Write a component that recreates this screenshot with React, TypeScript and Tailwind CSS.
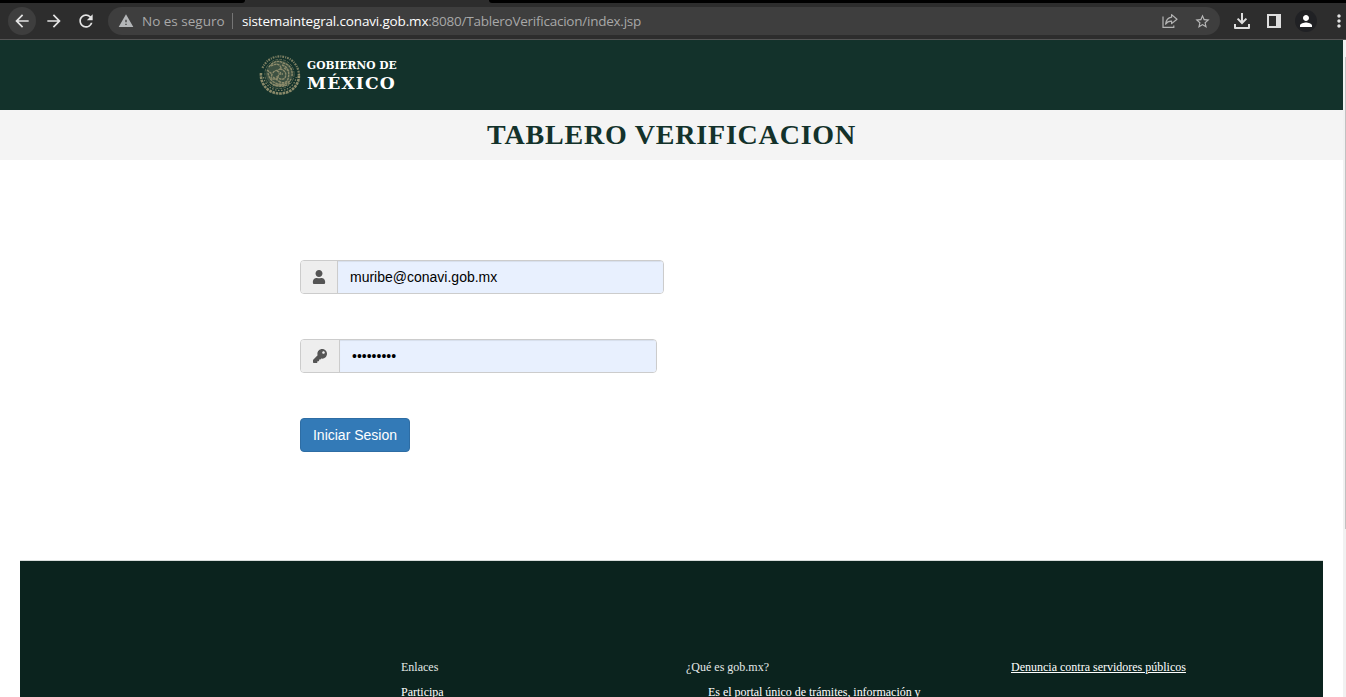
import React from "react";
import { MdArrowBack, MdArrowForward, MdRefresh, MdWarning, MdStarBorder, MdPerson, MdMoreVert } from "react-icons/md";
import { FaUser, FaKey } from "react-icons/fa";

function ShareIcon() {
  return (
    <svg width="16" height="16" viewBox="0 0 16 16" fill="none" stroke="#b4b4b4" strokeWidth="1.2">
      <path d="M1 3.5V14.4H11.8V12.6" />
      <path d="M9.6 1.6L15 6.2L9.6 10.6V8.2C6.8 8.1 5 9 3.6 11.2C4 7.4 6 4.7 9.6 4.2Z" strokeLinejoin="round" />
    </svg>
  );
}

function DownloadIcon() {
  return (
    <svg width="16" height="16" viewBox="0 0 16 16" fill="none" stroke="#dedede" strokeWidth="2">
      <path d="M8 0V10M3.6 5.6L8 10L12.4 5.6" />
      <path d="M1 11V15H15V11" strokeLinejoin="round" />
    </svg>
  );
}

function PanelIcon() {
  return (
    <svg width="14" height="14" viewBox="0 0 14 14">
      <path fill="#dedede" fillRule="evenodd" d="M0 0H14V14H0ZM2 2V12H9V2Z" />
    </svg>
  );
}

function Emblem() {
  return (
    <svg width="42" height="42" viewBox="0 0 42 42" fill="none" stroke="#a09a76">
      <path d="M3.5 14A19 19 0 0 1 38.5 14" strokeWidth="2.2" strokeDasharray="1.8 1.1 1 1" opacity=".75" />
      <path d="M38.5 14A19 19 0 0 1 39.7 24" strokeWidth="2.2" strokeDasharray="1.8 1.1" opacity=".75" />
      <path d="M2 19C1 31 10 39.5 21 39.5S41 31 39.8 20" strokeWidth="2.6" strokeDasharray="2.6 .8" opacity=".85" />
      <path d="M4.5 23C6 31 13 36.5 21 36.5S36 31 37.2 23" strokeWidth="1.2" strokeDasharray="1.5 1.5" opacity=".8" />
      <circle cx="20.5" cy="20" r="13.5" fill="#a09a76" fillOpacity=".3" stroke="none" />
      <circle cx="20.5" cy="20" r="14.6" strokeWidth="1" opacity=".5" strokeDasharray="3 1" />
      <g strokeWidth="1.4" strokeDasharray="2.6 .6" opacity=".8">
        <path d="M10 13C14 7 20 6 24 9C30 10 34 15 33 22" />
        <path d="M12 12C17 9 21 10 22 14C20 17 15 16 14 19" />
        <path d="M23 11C29 13 31 18 29 25C28 29 23 30 20 27" />
        <path d="M21 15C26 16 28 19 26 24C23 27 19 24 17 22" />
        <path d="M9 19C10 25 14 29 20 30C25 31 30 29 32 25" />
        <path d="M8 16L13 20L12 25L18 25L20 20L24 20" />
        <path d="M11 28C16 33 25 34 31 29M14 31L28 31M25 14L30 17M18 17L22 19M14 23L21 28" />
      </g>
    </svg>
  );
}

function BrowserBar() {
  return (
    <div className="flex h-10 w-full shrink-0 flex-col border-b border-[#555555] bg-[#2d2d2d]">
      <div className="flex h-[3px] shrink-0 justify-between">
        <div className="w-[245px] rounded-br-[3px] bg-black" />
        <div className="w-[857px] rounded-bl-[3px] bg-black" />
      </div>
      <div className="flex h-9 items-center pl-2 text-[#e4e4e4]">
        <div className="flex size-7 items-center justify-center rounded-full bg-[#3e3e3e]"><MdArrowBack size={20} /></div>
        <div className="ml-1 flex size-7 items-center justify-center"><MdArrowForward size={20} /></div>
        <div className="ml-1 flex size-7 items-center justify-center"><MdRefresh size={20} /></div>
        <div className="ml-2 flex h-7 w-[1112px] items-center rounded-full bg-[#3e3e3e] pl-[10px] font-['Open_Sans','Noto_Sans',sans-serif] text-[13.5px] whitespace-nowrap text-[#a8a8a8]">
          <MdWarning size={16} className="text-[#b4b6b8]" />
          <span className="ml-2 w-[90px]">No es seguro</span>
          <span className="h-4 w-px bg-[#757575]" />
          <span className="ml-[9px] tracking-[-0.16px] text-white">sistemaintegral.conavi.gob.mx</span>
          <span className="tracking-[-0.24px]">:8080/TableroVerificacion/index.jsp</span>
          <div className="mr-[9px] ml-auto flex items-center gap-4 text-[#b8b8b8]"><ShareIcon /><MdStarBorder size={17} /></div>
        </div>
        <div className="ml-[14px]"><DownloadIcon /></div>
        <div className="ml-[17px]"><PanelIcon /></div>
        <div className="ml-[14px] flex size-[22px] items-center justify-center rounded-full bg-[#202124] text-white"><MdPerson size={18} /></div>
        <div className="ml-[12px] -mr-2 shrink-0"><MdMoreVert size={20} /></div>
      </div>
    </div>
  );
}

function SiteHeader() {
  return (
    <header className="flex h-[70px] shrink-0 bg-[#13322b] pt-[14px] pl-[259px]">
      <Emblem />
      <div className="ml-[6px] font-['DejaVu_Serif','Noto_Serif',serif] font-bold whitespace-nowrap text-white">
        <div className="mt-[5px] text-[10.7px] leading-[13px]">GOBIERNO DE</div>
        <div className="mt-px text-[17.2px] leading-[20px] tracking-[1.1px]">MÉXICO</div>
      </div>
    </header>
  );
}

function LoginForm() {
  return (
    <form className="flex h-[400px] shrink-0 flex-col items-start pt-[100px] pl-[300px] font-['Liberation_Sans',Arial,sans-serif] text-[14px]">
      <div className="flex h-[34px] w-[364px] overflow-hidden rounded-[4px] border border-[#cccccc]">
        <span className="flex w-[37px] items-center justify-center border-r border-[#cccccc] bg-[#eeeeee] text-[#555555]"><FaUser size={14} /></span>
        <input className="min-w-0 flex-1 bg-[#e8f0fe] px-3 text-black shadow-[inset_0_1px_1px_rgba(0,0,0,0.075)] outline-none" defaultValue="muribe@conavi.gob.mx" />
      </div>
      <div className="mt-[45px] flex h-[34px] w-[357px] overflow-hidden rounded-[4px] border border-[#cccccc]">
        <span className="flex w-[39px] items-center justify-center border-r border-[#cccccc] bg-[#eeeeee] text-[#555555]"><FaKey size={14} /></span>
        <input type="password" className="min-w-0 flex-1 bg-[#e8f0fe] px-3 text-black shadow-[inset_0_1px_1px_rgba(0,0,0,0.075)] outline-none" defaultValue="123456789" />
      </div>
      <button type="button" className="mt-[45px] h-[34px] w-[110px] rounded-[4px] border border-[#2e6da4] bg-[#337ab7] text-white">Iniciar Sesion</button>
    </form>
  );
}

function Footer() {
  return (
    <footer className="mx-5 flex min-h-0 flex-1 border-t border-[#d8dcdb] bg-[#0b231e] pt-[97px] pl-[381px] font-['Liberation_Serif','Times_New_Roman',serif] text-[12px] leading-[18px] whitespace-nowrap text-white">
      <div className="w-[285px]">
        <p className="text-[#e4e8e7]">Enlaces</p>
        <p className="mt-[7px]">Participa</p>
      </div>
      <div className="w-[325px]">
        <p className="text-[#e4e8e7]">¿Qué es gob.mx?</p>
        <p className="mt-[7px] pl-[22px] tracking-[-0.03px]">Es el portal único de trámites, información y</p>
      </div>
      <div><a className="underline">Denuncia contra servidores públicos</a></div>
    </footer>
  );
}

export default function App() {
  return (
    <div className="flex h-[697px] w-[1346px] flex-col overflow-hidden bg-white">
      <BrowserBar />
      <div className="flex min-h-0 flex-1">
        <main className="flex w-[1343px] flex-col overflow-hidden">
          <SiteHeader />
          <h1 className="h-[50px] shrink-0 bg-[#f4f4f4] text-center font-['Liberation_Serif','Times_New_Roman',serif] text-[28px] leading-[50px] font-bold tracking-[0.8px] text-[#13322b]">TABLERO VERIFICACION</h1>
          <LoginForm />
          <Footer />
        </main>
        <div className="flex w-[3px] justify-end bg-[#f1f1f1] pt-[17px]">
          <div className="h-[472px] w-px bg-[#c1c1c1]" />
        </div>
      </div>
    </div>
  );
}
